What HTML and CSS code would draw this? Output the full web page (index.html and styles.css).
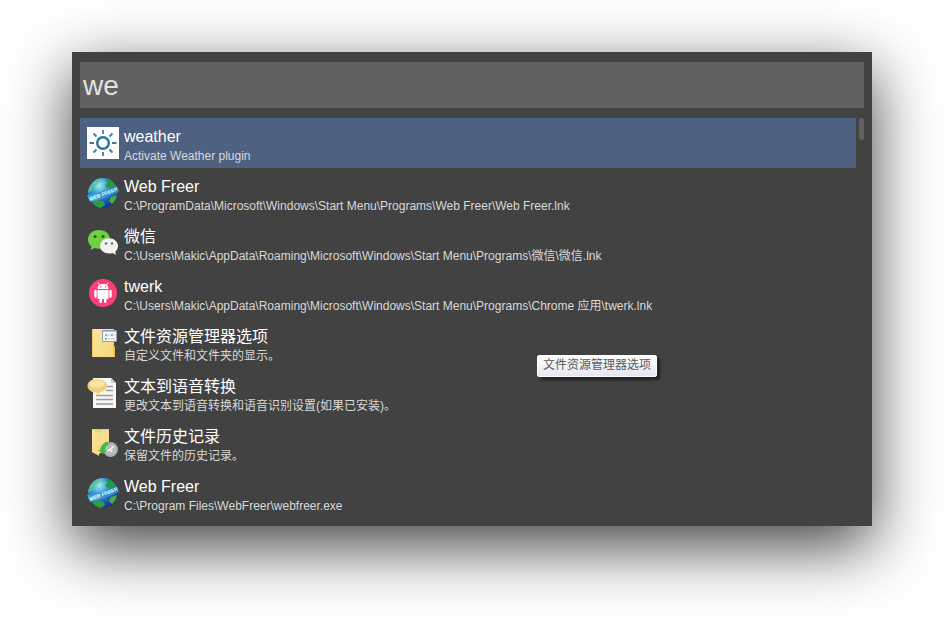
FILE: index.html
```html
<!DOCTYPE html>
<html lang="zh-CN">
<head>
  <meta charset="utf-8">
  <title>Launcher</title>
  <link rel="stylesheet" href="styles.css">
</head>
<body>
  <!-- shared icon, used by both Web Freer results -->
  <svg class="defs" width="0" height="0" aria-hidden="true">
    <defs>
      <radialGradient id="sea" cx="0.38" cy="0.25" r="0.8">
        <stop offset="0" stop-color="#a5ecf2"/>
        <stop offset="0.35" stop-color="#3a9fd8"/>
        <stop offset="0.7" stop-color="#2258b8"/>
        <stop offset="1" stop-color="#142a7c"/>
      </radialGradient>
      <linearGradient id="band" x1="0" y1="1" x2="1" y2="0">
        <stop offset="0" stop-color="#3fb0e0"/>
        <stop offset="1" stop-color="#1a78a8"/>
      </linearGradient>
      <linearGradient id="folder" x1="0" y1="0" x2="1" y2="1">
        <stop offset="0" stop-color="#fbe7a2"/>
        <stop offset="1" stop-color="#f5d67a"/>
      </linearGradient>
      <symbol id="globe" viewBox="0 0 32 32">
        <circle cx="16" cy="16" r="15" fill="url(#sea)"/>
        <path d="M3 9Q7 3 12 2L14 4 11 7 8 9 7 12 4 14 2 16 1 14Z" fill="#58c98a" opacity=".7"/>
        <path d="M18 2Q26 3 29 9L27 12 24 10 20 11 18 8 21 6Z" fill="#239b43"/>
        <path d="M5 25L11 23 17 25 18 28 14 31Q8 30 5 25Z" fill="#2f9d48"/>
        <path d="M24 20L30 18Q29 24 25 27L22 24Z" fill="#49ad35"/>
        <path d="M0 18Q15 17 29 8L32 15Q18 22 3 25Z" fill="url(#band)"/>
        <text class="globe-text" x="3" y="24" transform="rotate(-21 3 24)">WEB FREER</text>
      </symbol>
    </defs>
  </svg>

  <main class="launcher">
    <input class="query" type="text" value="we" aria-label="Query">

    <div class="results">
      <ul class="result-list">
        <li class="result selected">
          <svg class="icon" viewBox="0 0 32 32" aria-hidden="true">
            <path d="M0 0H32V32H0Z" fill="#fff"/>
            <circle cx="16" cy="16" r="5.8" fill="none" stroke="#27739b" stroke-width="2.4"/>
            <path d="M16 3V7M16 25V29M2.5 16H7M25 16H29.5M6.5 6.5L9.5 9.5M22.5 22.5L25.5 25.5M6.5 25.5L9.5 22.5M22.5 9.5L25.5 6.5" stroke="#397d99" stroke-width="1.8"/>
          </svg>
          <div class="text">
            <div class="title">weather</div>
            <div class="subtitle">Activate Weather plugin</div>
          </div>
        </li>
        <li class="result">
          <svg class="icon" aria-hidden="true"><use href="#globe"/></svg>
          <div class="text">
            <div class="title">Web Freer</div>
            <div class="subtitle">C:\ProgramData\Microsoft\Windows\Start Menu\Programs\Web Freer\Web Freer.lnk</div>
          </div>
        </li>
        <li class="result">
          <svg class="icon" viewBox="0 0 32 32" aria-hidden="true">
            <path d="M12 3C5.5 3 1 7.2 1 12.5C1 15.6 2.5 18 4.500 19.5L3.5 23L7.5 21C9 21.6 10.5 21.8 12 21.8C18.5 21.800 23 17.8 23 12.5S18.5 3 12 3Z" fill="#71cf43"/>
            <circle cx="8" cy="9.5" r="1.6" fill="#245f17"/>
            <circle cx="16" cy="9.5" r="1.6" fill="#245f17"/>
            <path d="M22 11.3C17 11.3 13 14.8 13 19S17 26.5 22 26.5C23.2 26.5 24.5 26.3 25.5 25.9L29 27.7L28.2 24.8C30 23.4 31 21.3 31 19C31 14.8 27 11.3 22 11.3Z" fill="#f2f2f2"/>
            <circle cx="19" cy="16.5" r="1.2" fill="#6c6c6c"/>
            <circle cx="25" cy="16.5" r="1.2" fill="#6c6c6c"/>
          </svg>
          <div class="text">
            <div class="title">微信</div>
            <div class="subtitle">C:\Users\Makic\AppData\Roaming\Microsoft\Windows\Start Menu\Programs\微信\微信.lnk</div>
          </div>
        </li>
        <li class="result">
          <svg class="icon" viewBox="0 0 32 32" aria-hidden="true">
            <circle cx="16" cy="16" r="14" fill="#fb4079"/>
            <path d="M10.5 12Q10.5 7 16 7T21.5 12Z" fill="#fff"/>
            <path d="M12.5 8L11 5.8M19.5 8L21 5.8" stroke="#fff"/>
            <path d="M10.5 13H21.5V21Q21.5 22 20.5 22H19.5V25Q19.5 26 18.3 26T17 25V22H15V25Q15 26 13.7 26T12.5 25V22H11.5Q10.5 22 10.5 21Z" fill="#fff"/>
            <path d="M8.5 14V19.5M23.5 14V19.5" stroke="#fff" stroke-width="2.4" stroke-linecap="round"/>
            <circle cx="13.5" cy="9.8" r=".7" fill="#fb4079"/>
            <circle cx="18.5" cy="9.8" r=".7" fill="#fb4079"/>
          </svg>
          <div class="text">
            <div class="title">twerk</div>
            <div class="subtitle">C:\Users\Makic\AppData\Roaming\Microsoft\Windows\Start Menu\Programs\Chrome 应用\twerk.lnk</div>
          </div>
        </li>
        <li class="result">
          <svg class="icon" viewBox="0 0 32 32" aria-hidden="true">
            <path d="M5 2H27V20L28 21V30H5Z" fill="url(#folder)"/>
            <path d="M5 2H6V30H5Z" fill="#eac763"/>
            <path d="M26 16L28 20V30H27Z" fill="#e0b950"/>
            <path d="M15.5 3.5H29.5V14.5H15.5Z" fill="#f4f8fb" stroke="#929da5"/>
            <path d="M16 4H29V5H16Z" fill="#b4c5d0"/>
            <path d="M18 7H20V9H18ZM18 11H20V13H18ZM24 7H26V9H24Z" fill="#7fb0d4"/>
            <path d="M21 8H23M21 12H23M27 8H28M24 12H28" stroke="#b0bcc5"/>
          </svg>
          <div class="text">
            <div class="title">文件资源管理器选项</div>
            <div class="subtitle">自定义文件和文件夹的显示。</div>
          </div>
          <div class="tooltip" role="tooltip">文件资源管理器选项</div>
        </li>
        <li class="result">
          <svg class="icon" viewBox="0 0 32 32" aria-hidden="true">
            <path d="M6 1H24L29 6V31H6Z" fill="#f6f6f4"/>
            <path d="M24 1L29 6H24Z" fill="#c9cac9"/>
            <path d="M19 9.5H26M19 13.5H26M9 18.5H26M9 22.5H26M9 27H26" stroke="#9a9c9a" stroke-width="1.4"/>
            <path d="M10 2C4.5 2 .5 4.900 .5 8.700S4.5 15.500 9 15.500L12 19.5L12.500 15.300C17 14.600 20 12.300 20 8.700C20 4.900 15.500 2 10 2Z" fill="#efd17d"/>
            <ellipse cx="10" cy="7" rx="7.500" ry="3.800" fill="#f9e4a4"/>
          </svg>
          <div class="text">
            <div class="title">文本到语音转换</div>
            <div class="subtitle">更改文本到语音转换和语音识别设置(如果已安装)。</div>
          </div>
        </li>
        <li class="result">
          <svg class="icon" viewBox="0 0 32 32" aria-hidden="true">
            <path d="M5 2H22V23H5Z" fill="#edcb72"/>
            <path d="M5 2L12 6V29L5 25Z" fill="url(#folder)"/>
            <path d="M12 6L15 3H22V20L12 27Z" fill="#f5dc90"/>
            <circle cx="23.5" cy="22.5" r="7.5" fill="#a9adab"/>
            <circle cx="23.5" cy="22.5" r="5.8" fill="#b9bdba"/>
            <path d="M20 24L23 22.5L27 19M23 22.5L25 25" fill="none" stroke="#f4f4f4" stroke-width="1.5"/>
            <path d="M21 14.5Q14 16 13 23H11L16 27L20 23H17.500Q18 19 22 17Z" fill="#43b84b"/>
          </svg>
          <div class="text">
            <div class="title">文件历史记录</div>
            <div class="subtitle">保留文件的历史记录。</div>
          </div>
        </li>
        <li class="result">
          <svg class="icon" aria-hidden="true"><use href="#globe"/></svg>
          <div class="text">
            <div class="title">Web Freer</div>
            <div class="subtitle">C:\Program Files\WebFreer\webfreer.exe</div>
          </div>
        </li>
      </ul>
      <div class="scroll-thumb"></div>
    </div>
  </main>
</body>
</html>
```
FILE: styles.css
```css
html {
  background-color: #fff;
}

body {
  box-sizing: border-box;
  min-height: 100vh;
  margin: 0;
  padding: 52px 72px;
  font-family: "Liberation Sans", Arial, "Noto Sans CJK SC", sans-serif;
}

.defs {
  position: absolute;
}

.launcher {
  display: flex;
  flex-direction: column;
  gap: 10px;
  padding: 10px 8px 8px;
  background-color: #424242;
  box-shadow: 0 20px 60px rgba(0, 0, 0, 0.75);
}

.query {
  box-sizing: border-box;
  width: 100%;
  height: 46px;
  padding: 2px 3px 0;
  border: 0;
  outline: 0;
  background-color: #616161;
  color: #e3e3e3;
  font-family: inherit;
  font-size: 28px;
}

.results {
  display: flex;
  gap: 3px;
}

.result-list {
  flex: 1;
  min-width: 0;
  margin: 0;
  padding: 0;
  list-style: none;
}

.result {
  position: relative;
  display: flex;
  align-items: center;
  gap: 5px;
  height: 50px;
  padding: 0 7px;
}

.selected {
  background-color: #4f6180;
}

.icon {
  flex: none;
  width: 32px;
  height: 32px;
}

.globe-text {
  fill: #f3fbff;
  font-size: 5px;
  font-weight: bold;
}

.text {
  min-width: 0;
  padding-top: 6px;
  white-space: nowrap;
}

.title {
  height: 20px;
  line-height: 20px;
  color: #fff;
  font-size: 16px;
}

.subtitle {
  height: 18px;
  line-height: 18px;
  color: #d9d9d9;
  font-size: 12px;
}

.scroll-thumb {
  width: 5px;
  height: 22px;
  border-radius: 2px;
  background-color: #616161;
}

.tooltip {
  position: absolute;
  top: 37px;
  left: 457px;
  z-index: 1;
  box-sizing: border-box;
  height: 22px;
  padding: 0 5px;
  border: 1px solid #fff;
  border-radius: 2px;
  background: linear-gradient(#fff, #e4e5f0);
  box-shadow: 3px 3px 3px rgba(0, 0, 0, 0.5);
  color: #575757;
  font-size: 12px;
  line-height: 18px;
  white-space: nowrap;
}
```
